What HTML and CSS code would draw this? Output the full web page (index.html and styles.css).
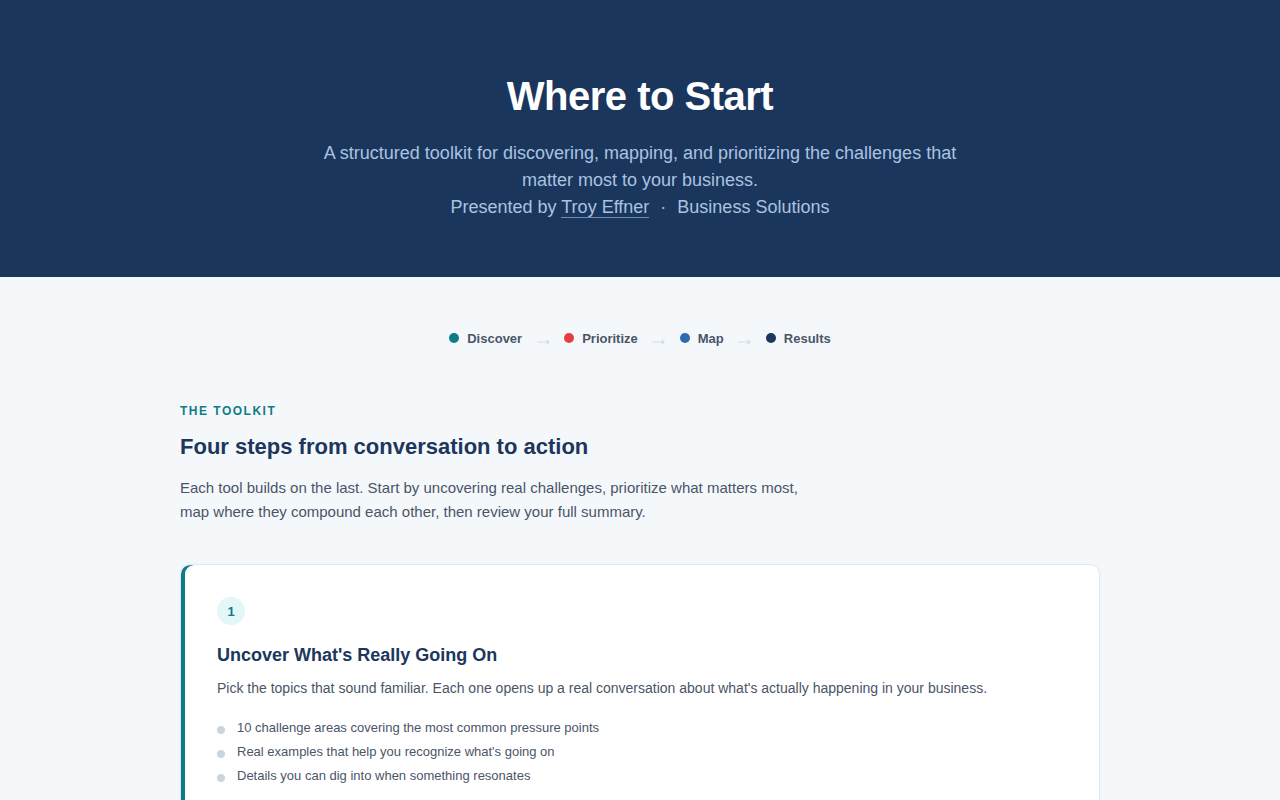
FILE: index.html
```html
<!DOCTYPE html>
<html lang="en">
<head>
<meta charset="utf-8">
<title>Where to Start</title>
<link rel="stylesheet" href="styles.css">
</head>
<body>
<header class="hero">
  <h1 class="hero-title">Where to Start</h1>
  <p class="hero-sub">A structured toolkit for discovering, mapping, and prioritizing the challenges that matter most to your business.<br>Presented by <a class="hero-link" href="#">Troy Effner</a> <span class="sep">·</span> Business Solutions</p>
</header>
<main class="main">
  <nav class="steps">
    <span class="step"><span class="dot dot-teal"></span>Discover</span>
    <svg class="arrow" width="13" height="6" viewBox="0 0 13 6"><path d="M0 3H12M9.5 0.8L12 3L9.5 5.2" fill="none" stroke="#d3dbe5" stroke-width="1.2"/></svg>
    <span class="step"><span class="dot dot-red"></span>Prioritize</span>
    <svg class="arrow" width="13" height="6" viewBox="0 0 13 6"><path d="M0 3H12M9.5 0.8L12 3L9.5 5.2" fill="none" stroke="#d3dbe5" stroke-width="1.2"/></svg>
    <span class="step"><span class="dot dot-blue"></span>Map</span>
    <svg class="arrow" width="13" height="6" viewBox="0 0 13 6"><path d="M0 3H12M9.5 0.8L12 3L9.5 5.2" fill="none" stroke="#d3dbe5" stroke-width="1.2"/></svg>
    <span class="step"><span class="dot dot-navy"></span>Results</span>
  </nav>
  <section class="intro">
    <div class="eyebrow">THE TOOLKIT</div>
    <h2 class="intro-title">Four steps from conversation to action</h2>
    <p class="intro-text">Each tool builds on the last. Start by uncovering real challenges, prioritize what matters most, map where they compound each other, then review your full summary.</p>
  </section>
  <article class="card">
    <div class="num">1</div>
    <h3 class="card-title">Uncover What's Really Going On</h3>
    <p class="card-text">Pick the topics that sound familiar. Each one opens up a real conversation about what's actually happening in your business.</p>
    <ul class="card-list">
      <li>10 challenge areas covering the most common pressure points</li>
      <li>Real examples that help you recognize what's going on</li>
      <li>Details you can dig into when something resonates</li>
    </ul>
  </article>
</main>
</body>
</html>
```
FILE: styles.css
```css
* { box-sizing: border-box; }
body {
  margin: 0;
  font-family: "Liberation Sans", Arial, sans-serif;
  background: #f5f8fb;
  color: #4a5568;
}
.hero {
  background: #1b365d;
  height: 277px;
  padding-top: 70px;
  text-align: center;
}
.hero-title {
  margin: 0;
  color: #ffffff;
  font-size: 40px;
  letter-spacing: -0.5px;
  line-height: 52px;
  font-weight: 700;
}
.hero-sub {
  margin: 18px auto 0;
  max-width: 660px;
  font-size: 18px;
  line-height: 27px;
  color: #a9c3e0;
}
.hero-link {
  color: #a9c3e0;
  text-decoration: none;
  border-bottom: 1px solid #6f8db3;
}
.sep { margin: 0 6px; }
.main {
  max-width: 920px;
  margin: 0 auto;
  padding-top: 51px;
}
.steps {
  display: flex;
  justify-content: center;
  align-items: center;
  gap: 14.5px;
  font-size: 13px;
  font-weight: 700;
  color: #4a5568;
  height: 20px;
}
.step { display: flex; align-items: center; gap: 8px; }
.dot { width: 10px; height: 10px; border-radius: 50%; display: inline-block; }
.dot-teal { background: #0e7c86; }
.dot-red { background: #e53e3e; }
.dot-blue { background: #2b6cb0; }
.dot-navy { background: #1c365c; }
.arrow { margin-top: 8px; flex: none; }
.intro { padding-top: 56px; }
.eyebrow {
  font-size: 12px;
  font-weight: 700;
  letter-spacing: 1.5px;
  color: #0e7c86;
  line-height: 14px;
}
.intro-title {
  margin: 15px 0 0;
  font-size: 22px;
  line-height: 28px;
  font-weight: 700;
  color: #1c365c;
}
.intro-text {
  margin: 15px 0 0;
  max-width: 630px;
  font-size: 15px;
  line-height: 24px;
  color: #4a5568;
}
.card {
  margin-top: 40px;
  background: #ffffff;
  border: 1px solid #e2e8f0;
  border-radius: 10px;
  padding: 32px 32px 32px 36px;
  box-shadow: inset 4px 0 0 #0e7c86, 0 1px 3px rgba(0,0,0,0.04);
}
.num {
  width: 28px;
  height: 28px;
  border-radius: 50%;
  background: #e3f6f8;
  color: #0e7c86;
  font-size: 13px;
  font-weight: 700;
  display: flex;
  align-items: center;
  justify-content: center;
}
.card-title {
  margin: 18px 0 0;
  font-size: 18px;
  line-height: 24px;
  font-weight: 700;
  color: #1c365c;
}
.card-text {
  margin: 10px 0 0;
  font-size: 14px;
  line-height: 22px;
  color: #4a5568;
}
.card-list {
  list-style: none;
  margin: 17px 0 0;
  padding: 0;
}
.card-list li {
  display: flex;
  align-items: center;
  gap: 12px;
  font-size: 13px;
  line-height: 24px;
  color: #4a5568;
}
.card-list li::before {
  content: "";
  width: 8px;
  height: 8px;
  border-radius: 50%;
  background: #cbd5e0;
  margin-top: 4px;
  flex: none;
}
```
